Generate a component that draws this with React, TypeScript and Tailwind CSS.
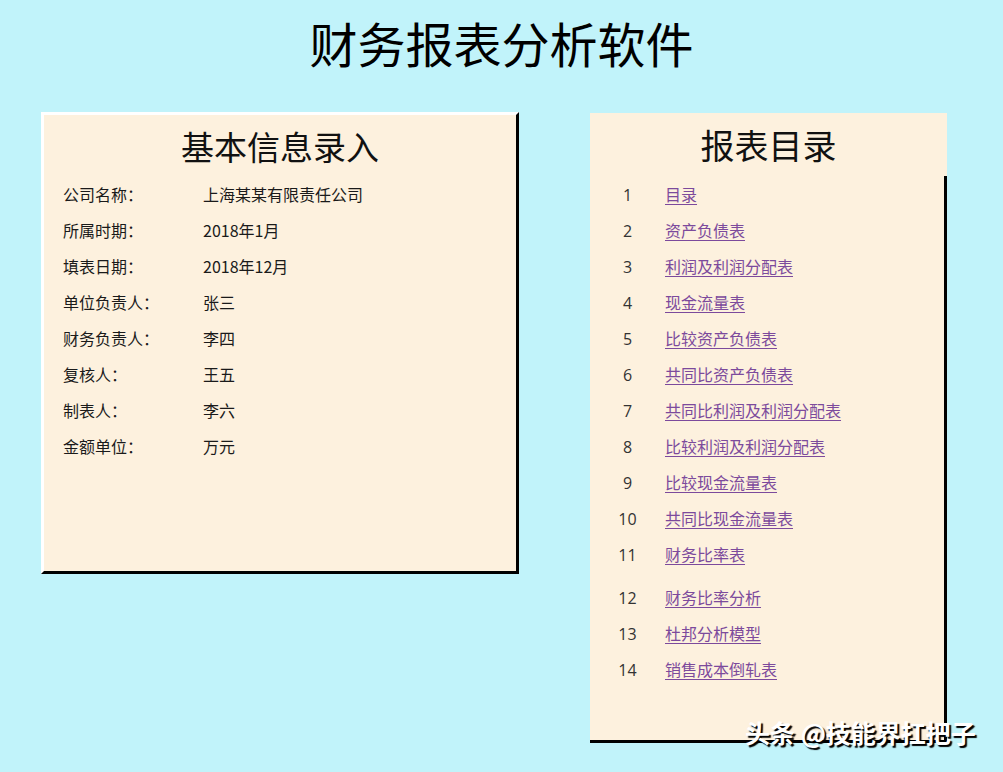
import React from "react";

const INFO = [
  { label: "公司名称：", value: "上海某某有限责任公司" },
  { label: "所属时期：", value: "2018年1月" },
  { label: "填表日期：", value: "2018年12月" },
  { label: "单位负责人：", value: "张三" },
  { label: "财务负责人：", value: "李四" },
  { label: "复核人：", value: "王五" },
  { label: "制表人：", value: "李六" },
  { label: "金额单位：", value: "万元" },
];

const REPORTS = [
  "目录",
  "资产负债表",
  "利润及利润分配表",
  "现金流量表",
  "比较资产负债表",
  "共同比资产负债表",
  "共同比利润及利润分配表",
  "比较利润及利润分配表",
  "比较现金流量表",
  "共同比现金流量表",
  "财务比率表",
  "财务比率分析",
  "杜邦分析模型",
  "销售成本倒轧表",
];

const cjk = "font-['Noto_Sans_CJK_SC','Noto_Sans',sans-serif]";

export default function App() {
  return (
    <div className={`relative h-[772px] w-[1003px] overflow-hidden bg-[#c1f3fa] ${cjk}`}>
      {/* Header */}
      <h1 className="pt-[12px] text-center text-[48px] leading-[60px] font-normal text-black">
        财务报表分析软件
      </h1>

      <div className="mt-[40px] flex items-start pl-[41px]">
        {/* Basic info card */}
        <section className="h-[462px] w-[478px] border-t-[3px] border-l-[3px] border-r-[3px] border-b-[3px] border-t-white border-l-white border-r-black border-b-black bg-[#fdf1de]">
          <h2 className="pt-[11px] text-center text-[33px] leading-[40px] font-normal text-[#111]">
            基本信息录入
          </h2>
          <div className="mt-[10px] pl-[19px]">
            {INFO.map((row) => (
              <div key={row.label} className="flex h-[36px] items-center text-[16px] text-[#1a1a1a]">
                <span className="w-[140px]">{row.label}</span>
                <span>{row.value}</span>
              </div>
            ))}
          </div>
        </section>

        {/* Report list card */}
        <section className="relative ml-[71px] mt-[1px] h-[630px] w-[357px] border-b-[3px] border-b-black bg-[#fdf1de]">
          <div className="absolute right-0 top-[63px] bottom-0 w-[3px] bg-black" />
          <h2 className="pt-[12px] text-center text-[34px] leading-[40px] font-normal text-[#111]">
            报表目录
          </h2>
          <div className="mt-[12px]">
            {REPORTS.map((name, i) => (
              <div
                key={name}
                className={`flex h-[36px] items-baseline text-[16px] leading-[34px] ${i === 11 ? "mt-[7px]" : ""}`}
              >
                <span className="w-[75px] shrink-0 text-center font-['Open_Sans',sans-serif] text-[#333]">
                  {i + 1}
                </span>
                <a href="#" className="text-[#7c4a9c] underline underline-offset-[3px]">
                  {name}
                </a>
              </div>
            ))}
          </div>
        </section>
      </div>

      {/* Watermark */}
      <div className="absolute left-[745px] top-[714px] text-[25px] font-bold text-white [text-shadow:2px_2px_1px_#000]">
        头条 @技能界扛把子
      </div>
    </div>
  );
}
